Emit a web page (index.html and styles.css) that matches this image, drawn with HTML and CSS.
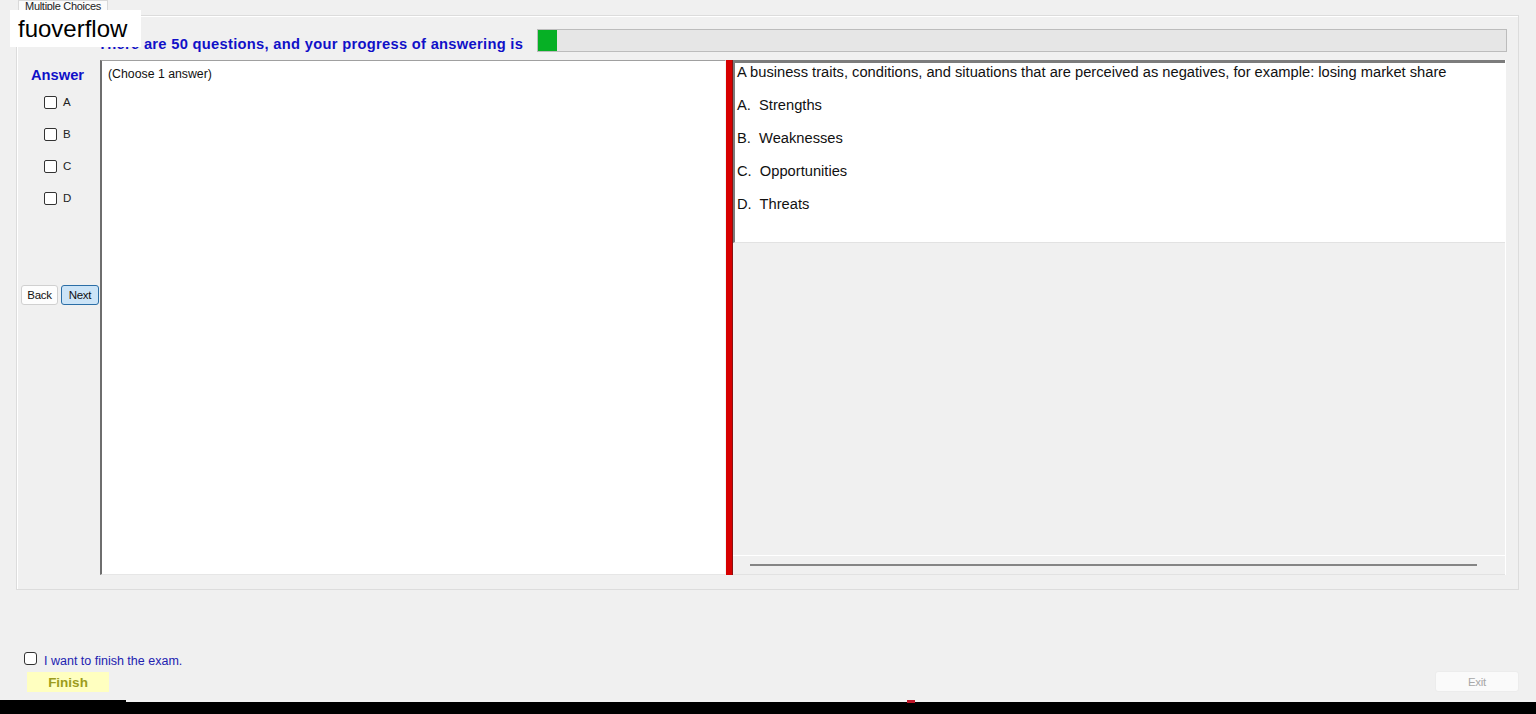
FILE: index.html
```html
<!DOCTYPE html>
<html>
<head>
<meta charset="utf-8">
<link rel="stylesheet" href="styles.css">
</head>
<body>
<div class="app">
  <div class="tabstrip"><div class="tab">Multiple Choices</div></div>
  <div class="tabpage">
    <div class="header">
      <div class="title">There are 50 questions, and your progress of answering is</div>
      <div class="progress"><div class="fill" style="width:19px"></div></div>
    </div>
    <div class="main">
      <div class="leftcol">
        <div class="answer">Answer</div>
        <label class="opt"><span class="box"></span>A</label>
        <label class="opt"><span class="box"></span>B</label>
        <label class="opt"><span class="box"></span>C</label>
        <label class="opt"><span class="box"></span>D</label>
        <div class="navbtns">
          <button class="btn back">Back</button>
          <button class="btn next">Next</button>
        </div>
      </div>
      <div class="textbox">(Choose 1 answer)</div>
      <div class="splitter"></div>
      <div class="rightpanel">
        <div class="rich">
          <p class="q">A business traits, conditions, and situations that are perceived as negatives, for example: losing market share</p>
          <p>A.&nbsp; Strengths</p>
          <p>B.&nbsp; Weaknesses</p>
          <p>C.&nbsp; Opportunities</p>
          <p>D.&nbsp; Threats</p>
        </div>
        <div class="lower"></div>
        <div class="scrollrow"><div class="scrollline"></div></div>
      </div>
    </div>
  </div>
  <div class="bottom">
    <label class="finishcheck"><span class="box"></span>I want to finish the exam.</label>
    <div class="btnrow">
      <button class="finish">Finish</button>
      <button class="exit">Exit</button>
    </div>
  </div>
  <div class="taskbar"><div class="tbline"><span class="redmark"></span></div></div>
</div>
<div class="watermark">fuoverflow</div>
</body>
</html>
```

FILE: styles.css
```css
html, body {
  margin: 0;
  padding: 0;
}
body {
  width: 1536px;
  height: 714px;
  overflow: hidden;
  background: #f0f0f0;
  font-family: "Liberation Sans", Arial, sans-serif;
  position: relative;
}
.app {
  display: flex;
  flex-direction: column;
  height: 714px;
}
.tabstrip {
  height: 15px;
  padding-left: 18px;
  display: flex;
  align-items: flex-end;
}
.tab {
  width: 90px;
  height: 15px;
  box-sizing: border-box;
  background: #fbfbfb;
  border: 1px solid #d9d9d9;
  border-bottom: none;
  font-size: 11px;
  line-height: 11px;
  color: #222;
  text-align: center;
  overflow: hidden;
  white-space: nowrap;
  letter-spacing: -0.3px;
}
.tabpage {
  margin-left: 16px;
  width: 1503px;
  height: 575px;
  box-sizing: border-box;
  border: 1px solid #dcdcdc;
  box-shadow: inset 1px 1px 0 #fff;
  padding-top: 13px;
}
.header {
  display: flex;
  align-items: center;
  height: 23px;
  margin-left: 81px;
  margin-right: 11px;
}
.title {
  font-weight: bold;
  font-size: 14.7px;
  letter-spacing: 0.3px;
  color: #1010c8;
  white-space: nowrap;
  margin-top: 7px;
}
.progress {
  flex: 1;
  height: 23px;
  box-sizing: border-box;
  margin-left: 14px;
  background: #e6e6e6;
  border: 1px solid #bcbcbc;
}
.fill {
  height: 100%;
  background: #06b025;
}
.main {
  display: flex;
  margin-top: 8px;
  height: 515px;
}
.leftcol {
  width: 83px;
  display: flex;
  flex-direction: column;
}
.answer {
  font-weight: bold;
  font-size: 14.7px;
  color: #1010c8;
  margin-left: 14px;
  margin-top: 7px;
  height: 22px;
}
.opt {
  display: flex;
  align-items: center;
  height: 32px;
  margin-left: 27px;
  font-size: 11.5px;
  color: #222;
  margin-top: -3px;
  margin-bottom: 3px;
}
.box {
  width: 11px;
  height: 11px;
  border: 1px solid #333;
  border-radius: 2px;
  background: #fff;
  margin-right: 6px;
  flex: none;
}
.navbtns {
  display: flex;
  gap: 3px;
  margin-left: 4px;
  margin-top: 68px;
}
.btn {
  height: 20px;
  padding: 0;
  font-family: "Liberation Sans", Arial, sans-serif;
  font-size: 11.5px;
  color: #111;
  border-radius: 3px;
  letter-spacing: -0.3px;
}
.back {
  width: 37px;
  background: #fdfdfd;
  border: 1px solid #d0d0d0;
}
.next {
  width: 38px;
  background: #cce4f7;
  border: 1px solid #2b6ea6;
}
.textbox {
  width: 626px;
  box-sizing: border-box;
  background: #fff;
  border-left: 2px solid #6e6e6e;
  border-top: 1px solid #a0a0a0;
  border-right: 1px solid #f4f4f4;
  border-bottom: 1px solid #e6e6e6;
  font-size: 12.3px;
  color: #111;
  padding: 6px 6px;
}
.splitter {
  width: 7px;
  background: #d70000;
  border-right: 1px solid #8a1010;
  box-sizing: border-box;
}
.rightpanel {
  width: 773px;
  display: flex;
  flex-direction: column;
  border-right: 1px solid #fff;
  box-sizing: border-box;
}
.rich {
  height: 183px;
  box-sizing: border-box;
  background: #fff;
  border-top: 3px solid #7c7c7c;
  border-left: 2px solid #7c7c7c;
  border-bottom: 1px solid #e2e2e2;
  padding: 0 3px 0 2px;
  font-size: 14.7px;
  color: #111;
}
.rich p {
  margin: 0;
  height: 33px;
  line-height: 18px;
  white-space: nowrap;
}
.lower {
  height: 312px;
  border-bottom: 1px solid #fff;
}
.scrollrow {
  flex: 1;
  padding-left: 17px;
  padding-right: 28px;
  display: flex;
  align-items: center;
  border-bottom: 1px solid #e2e2e2;
}
.scrollline {
  height: 2px;
  width: 100%;
  background: #858585;
}
.bottom {
  flex: 1;
  display: flex;
  flex-direction: column;
  justify-content: flex-end;
  padding-bottom: 8px;
}
.finishcheck {
  display: flex;
  align-items: center;
  margin-left: 24px;
  font-size: 12.5px;
  color: #2222b0;
  height: 14px;
  margin-top: 1px;
  position: relative;
  top: 2px;
}
.finishcheck .box {
  border-radius: 3px;
  border-color: #333;
  margin-right: 7px;
  margin-top: -5px;
}
.btnrow {
  display: flex;
  justify-content: space-between;
  align-items: flex-end;
  margin-top: 5px;
  padding-right: 17px;
}
.finish {
  margin-left: 27px;
  width: 82px;
  height: 20px;
  border: none;
  background: #ffffc0;
  color: #9c9c1c;
  font-family: "Liberation Sans", Arial, sans-serif;
  font-weight: bold;
  font-size: 13.5px;
  padding: 0;
}
.exit {
  width: 84px;
  height: 21px;
  background: #fafafa;
  border: 1px solid #ececec;
  border-radius: 3px;
  color: #a8a8a8;
  font-family: "Liberation Sans", Arial, sans-serif;
  font-size: 11.5px;
  padding: 0;
  letter-spacing: -0.3px;
}
.taskbar {
  height: 14px;
  background: #000;
  position: relative;
}
.tbline {
  height: 2px;
  margin-left: 126px;
  background: #f4f4f4;
  position: relative;
}
.redmark {
  position: absolute;
  left: 781px;
  top: 0;
  width: 8px;
  height: 3px;
  background: #c0182a;
}
.watermark {
  position: absolute;
  left: 10px;
  top: 10px;
  width: 131px;
  height: 37px;
  box-sizing: border-box;
  background: #fff;
  color: #000;
  font-family: "Liberation Sans", Arial, sans-serif;
  font-size: 24px;
  line-height: 37px;
  padding-left: 8px;
}
```
